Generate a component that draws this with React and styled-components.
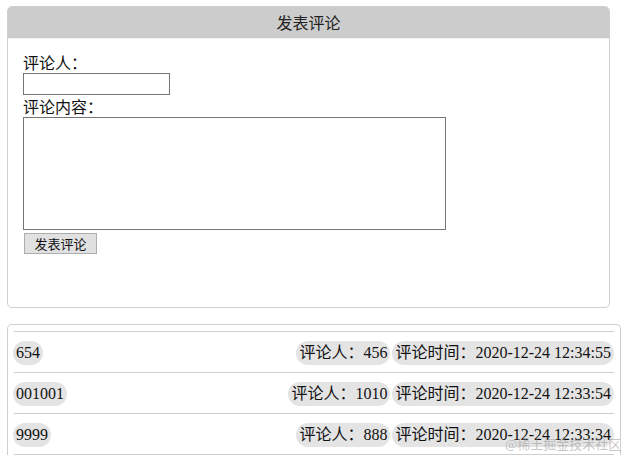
import React from 'react';
import styled, { createGlobalStyle } from 'styled-components';

const GlobalStyle = createGlobalStyle`
  body {
    margin: 0;
    background: #fff;
    font-family: "Noto Sans CJK SC", sans-serif;
    color: #000;
  }
`;

const Page = styled.div`
  position: relative;
  padding: 6px 6px 0 7px;
  display: flex;
  flex-direction: column;
  gap: 16px;
`;

const FormPanel = styled.div`
  width: 603px;
  height: 302px;
  border: 1px solid #cfcfcf;
  border-radius: 5px;
  overflow: hidden;
  box-sizing: border-box;
  display: flex;
  flex-direction: column;
`;

const PanelHeader = styled.div`
  height: 31px;
  line-height: 31px;
  background: #cccccc;
  text-align: center;
  font-size: 16px;
  color: #222;
  border-bottom: 1px solid #f0f0f0;
`;

const FormBody = styled.form`
  padding: 12px 15px;
  display: flex;
  flex-direction: column;
  align-items: flex-start;
`;

const Label = styled.label`
  font-size: 16px;
  line-height: 22px;
  color: #111;
`;

const TextInput = styled.input`
  width: 147px;
  height: 22px;
  box-sizing: border-box;
  border: 1px solid #767676;
  padding: 1px 2px;
  margin: 0;
`;

const TextArea = styled.textarea`
  width: 423px;
  height: 113px;
  box-sizing: border-box;
  border: 1px solid #767676;
  resize: none;
  margin: 0;
`;

const SubmitButton = styled.button`
  margin: 3px 0 0 1px;
  width: 73px;
  height: 21px;
  padding: 0;
  font-family: "Noto Sans CJK SC", sans-serif;
  font-size: 13px;
  line-height: 19px;
  background: #e1e1e1;
  border: 1px solid #adadad;
  color: #111;
`;

const ListPanel = styled.div`
  width: 614px;
  border: 1px solid #cfcfcf;
  border-bottom: none;
  border-radius: 5px 5px 0 0;
  box-sizing: border-box;
  padding: 6px 6px 0;
`;

const CommentList = styled.ul`
  list-style: none;
  margin: 0;
  padding: 0;
`;

const CommentRow = styled.li`
  border-top: 1px solid #cfcfcf;
  padding: 9px 0 7px;
  display: flex;
  justify-content: space-between;
  align-items: center;
  font-family: "Liberation Serif", "Noto Sans CJK SC", serif;
  font-size: 16px;
  &:last-child {
    border-bottom: 1px solid #cfcfcf;
  }
`;

const Meta = styled.div`
  display: flex;
  gap: 2px;
`;

const Pill = styled.span`
  display: inline-block;
  height: 24px;
  line-height: 24px;
  padding: 0 3px;
  margin-left: ${p => (p.$edge ? '-1px' : '0')};
  background: #e4e4e4;
  border-radius: 12px;
  color: #111;
`;

const Watermark = styled.div`
  position: absolute;
  left: 505px;
  top: 434px;
  font-size: 13px;
  color: rgba(150, 150, 150, 0.55);
  white-space: nowrap;
  pointer-events: none;
`;

const comments = [
  { content: '654', user: '456', time: '2020-12-24 12:34:55' },
  { content: '001001', user: '1010', time: '2020-12-24 12:33:54' },
  { content: '9999', user: '888', time: '2020-12-24 12:33:34' },
];

export default function App() {
  return (
    <>
      <GlobalStyle />
      <Page>
        <FormPanel>
          <PanelHeader>发表评论</PanelHeader>
          <FormBody onSubmit={e => e.preventDefault()}>
            <Label>评论人：</Label>
            <TextInput type="text" />
            <Label>评论内容：</Label>
            <TextArea />
            <SubmitButton type="submit">发表评论</SubmitButton>
          </FormBody>
        </FormPanel>

        <ListPanel>
          <CommentList>
            {comments.map(c => (
              <CommentRow key={c.content}>
                <Pill $edge>{c.content}</Pill>
                <Meta>
                  <Pill>评论人：{c.user}</Pill>
                  <Pill>评论时间：{c.time}</Pill>
                </Meta>
              </CommentRow>
            ))}
          </CommentList>
        </ListPanel>
        <Watermark>@稀土掘金技术社区</Watermark>
      </Page>
    </>
  );
}
